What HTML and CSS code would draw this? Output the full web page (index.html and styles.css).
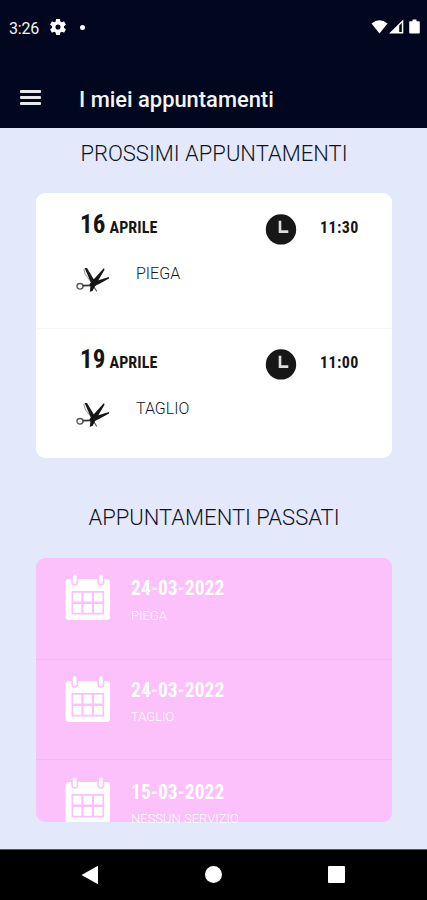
FILE: index.html
```html
<!DOCTYPE html>
<html lang="it">
<head>
<meta charset="utf-8">
<title>I miei appuntamenti</title>
<link rel="stylesheet" href="styles.css">
</head>
<body>
<svg class="defs" width="0" height="0" aria-hidden="true">
  <symbol id="scissors" viewBox="0 0 34 27">
    <g fill="none" stroke="#111" stroke-linecap="round">
      <ellipse cx="4" cy="19.3" rx="3.1" ry="2.8" stroke="#555" stroke-width="1.3"/>
      <path d="M7.3 18.6L16 18.4" stroke="#333" stroke-width="1.8"/>
      <path d="M8 2.5L9 7L15 15" stroke="#999" stroke-width="1"/>
      <path d="M18 20L20.5 24" stroke="#555" stroke-width="1.2"/>
    </g>
    <path d="M8.600 1L11 1L18.800 14L15.500 17Z" fill="#1b1b1b"/>
    <path d="M28 1L28.500 2.800L21 15.500L16.500 24L13.800 24.800L14.500 19L13.500 17Z" fill="#151515"/>
    <path d="M33 10L33 11.500L23 17L15.500 20.500L13.500 17.500L21.500 13.500Z" fill="#151515"/>
  </symbol>
  <symbol id="clock" viewBox="0 0 32 32">
    <circle cx="16" cy="16.400" r="15.2" fill="#171717"/>
    <path d="M15 7.7V18.6H23.3" fill="none" stroke="#ddd" stroke-width="2.6"/>
  </symbol>
  <symbol id="calendar" viewBox="0 0 46 48">
    <rect x="0.500" y="6" width="44.500" height="41" rx="3.5" fill="#fff"/>
    <g fill="#fff" stroke="#fcc0fb" stroke-width="1.6">
      <rect x="7" y="0.5" width="5.4" height="11.5" rx="2.7"/>
      <rect x="33.2" y="0.5" width="5.4" height="11.5" rx="2.7"/>
    </g>
    <rect x="6.5" y="18" width="32.500" height="23.500" fill="#fcc0fb"/>
    <path fill="#fff" d="M8.100 19.700h8.300v8.900H8.100zM18.500 19.700h8.500v8.900h-8.500zM29.100 19.700h8.300v8.900h-8.300zM8.100 30.900h8.300v8.900H8.100zM18.500 30.900h8.500v8.900h-8.500zM29.100 30.900h8.300v8.900h-8.300z"/>
  </symbol>
</svg>
<div class="screen">
  <header class="header">
    <div class="status">
      <span class="status-time">3:26</span>
      <svg class="gear" width="16" height="16" viewBox="2 2 20 20"><path fill="#fff" fill-rule="evenodd" d="M19.4 13c.1-.3.1-.7.1-1s0-.7-.1-1l2.200-1.700c.2-.2.2-.4.1-.6l-2-3.500c-.1-.2-.4-.3-.6-.2l-2.500 1c-.5-.4-1.100-.7-1.700-1l-.4-2.600c0-.2-.2-.4-.5-.4h-4c-.2 0-.5.2-.5.4l-.4 2.600c-.6.3-1.200.6-1.700 1l-2.500-1c-.2-.1-.5 0-.6.2l-2 3.500c-.1.2-.1.5.1.6L4.600 11c-.1.300-.1.700-.1 1s0 .7.1 1l-2.200 1.700c-.2.200-.2.400-.1.600l2 3.500c.1.200.4.300.6.200l2.500-1c.5.400 1.100.7 1.700 1l.4 2.600c0 .2.3.4.5.4h4c.3 0 .5-.2.5-.4l.4-2.600c.6-.3 1.200-.6 1.700-1l2.500 1c.2.100.5 0 .6-.2l2-3.500c.1-.2.1-.4-.1-.6zM12 15.200a3.200 3.200 0 1 1 0-6.400a3.200 3.200 0 0 1 0 6.400z"/></svg>
      <i class="dot"></i>
      <svg class="signals" width="50" height="16" viewBox="0 0 50 16">
        <path fill="#fff" d="M0.500 4.500Q8.500-2 16.500 4.500L8.500 14.500Z"/>
        <path fill="#fff" fill-rule="evenodd" d="M32.300.5V14.500H18ZM28.200 6.500V13h2.600V4Z"/>
        <path fill="#fff" d="M39.200 2.300h2.300V.5h4v1.800h2.300a1 1 0 0 1 1 1V13.500a1 1 0 0 1-1 1h-8.600a1 1 0 0 1-1-1V3.300a1 1 0 0 1 1-1z"/>
      </svg>
    </div>
    <div class="appbar">
      <div class="burger"><i></i><i></i><i></i></div>
      <h1 class="title">I miei appuntamenti</h1>
    </div>
  </header>
  <main class="content">
    <h2 class="heading heading-next">PROSSIMI APPUNTAMENTI</h2>
    <section class="card next">
      <article class="next-row">
        <div class="date"><b class="day">16</b><b class="month">APRILE</b></div>
        <svg class="clock"><use href="#clock"/></svg>
        <b class="time">11:30</b>
        <svg class="scissors"><use href="#scissors"/></svg>
        <span class="service">PIEGA</span>
      </article>
      <article class="next-row">
        <div class="date"><b class="day">19</b><b class="month">APRILE</b></div>
        <svg class="clock"><use href="#clock"/></svg>
        <b class="time">11:00</b>
        <svg class="scissors"><use href="#scissors"/></svg>
        <span class="service">TAGLIO</span>
      </article>
    </section>
    <h2 class="heading heading-past">APPUNTAMENTI PASSATI</h2>
    <section class="card past">
      <article class="past-row">
        <svg class="calendar"><use href="#calendar" width="46" height="48"/></svg>
        <div><b class="past-date">24-03-2022</b><span class="past-service">PIEGA</span></div>
      </article>
      <article class="past-row">
        <svg class="calendar"><use href="#calendar" width="46" height="48"/></svg>
        <div><b class="past-date">24-03-2022</b><span class="past-service">TAGLIO</span></div>
      </article>
      <article class="past-row">
        <svg class="calendar"><use href="#calendar" width="46" height="48"/></svg>
        <div><b class="past-date">15-03-2022</b><span class="past-service">NESSUN SERVIZIO</span></div>
      </article>
    </section>
  </main>
  <nav class="navbar">
    <svg width="18" height="20" viewBox="0 0 18 20"><path d="M17 .8V19.200L.5 10Z" fill="#fff"/></svg>
    <i class="home"></i>
    <i class="recent"></i>
  </nav>
</div>
</body>
</html>
```
FILE: styles.css
```css
* { box-sizing: border-box; }
body { margin: 0; font-family: Roboto, sans-serif; }
.defs { position: absolute; }
.screen {
  width: 427px;
  height: 900px;
  display: flex;
  flex-direction: column;
  overflow: hidden;
  background: #e3e9fa;
}
h1, h2 { margin: 0; }
svg { display: block; flex: none; }

.header { height: 128px; background: #00071e; color: #f4f4f4; }
.status {
  display: flex;
  align-items: center;
  height: 54px;
  padding: 0 6px 0 9px;
}
.status-time { width: 41px; font-size: 16px; letter-spacing: -0.2px; margin-top: 2px; }
.dot { width: 5px; height: 5px; margin-left: 14px; border-radius: 50%; background: #fff; }
.signals { margin-left: auto; }
.appbar { display: flex; height: 74px; padding: 36px 20px 0 20px; }
.burger { display: flex; flex-direction: column; gap: 3px; width: 21px; margin-right: 38px; }
.burger i { height: 3px; border-radius: 1px; background: #e8e8e8; }
.title { margin-top: -4px; font-size: 21.9px; line-height: 28px; font-weight: 500; white-space: nowrap; }

.content { height: 721px; padding: 0 35px 0 36px; }
.heading { font-size: 22px; line-height: 28px; font-weight: 300; color: #10131f; text-align: center; white-space: nowrap; }
.heading-next { padding-top: 12px; height: 65px; }
.heading-past { padding-top: 46px; height: 100px; }
.card { border-radius: 9px; }

.next { height: 265px; background: #fff; color: #161616; }
.next-row {
  display: grid;
  grid-template-columns: 60px 129px 55px 1fr;
  grid-template-rows: 46px 40px;
  height: 135px;
  padding: 20px 0 0 40px;
}
.next-row + .next-row { height: 130px; padding-top: 19px; border-top: 1px solid #f5f5f7; }
.date { grid-column: 1 / 3; display: flex; align-items: baseline; padding-left: 4px; line-height: 24px; }
.day { width: 29.5px; font-size: 25px; font-stretch: 75%; }
.month { font-size: 16px; font-stretch: 75%; letter-spacing: 0.1px; }
.time { font-size: 16px; font-stretch: 75%; line-height: 29px; letter-spacing: 0.4px; }
.clock { width: 32px; height: 32px; }
.scissors { width: 34px; height: 27px; margin-top: 8px; }
.service { font-size: 16px; line-height: 24px; font-weight: 300; margin-top: 3px; }

.past { height: 264px; background: #fcc0fb; color: #fff; }
.past-row { display: flex; gap: 20px; height: 100px; padding: 15px 0 0 29px; border-bottom: 1px solid #f4b6f5; }
.past-row:first-child { height: 102px; }
.past-row:last-child { height: 62px; padding-top: 16px; border: 0; }
.calendar { width: 46px; height: 48px; overflow: hidden; }
.past-row:last-child .calendar { height: 46px; }
.past-date { display: block; margin-top: 4px; font-size: 19.5px; line-height: 24px; font-stretch: 75%; letter-spacing: 0.05px; }
.past-service { display: block; margin-top: 6px; font-size: 13px; line-height: 18px; font-weight: 300; white-space: nowrap; }
.past-row + .past-row .past-service { margin-top: 5px; }
.past-row:last-child .past-date { margin-top: 5px; }

.navbar {
  display: flex;
  align-items: center;
  justify-content: space-between;
  height: 51px;
  padding: 0 82px 1px 81px;
  background: #000;
  border-top: 1px solid #55585f;
}
.home { width: 17px; height: 17px; border-radius: 50%; background: #fff; }
.recent { width: 17px; height: 17px; border-radius: 1px; background: #fff; }
```
